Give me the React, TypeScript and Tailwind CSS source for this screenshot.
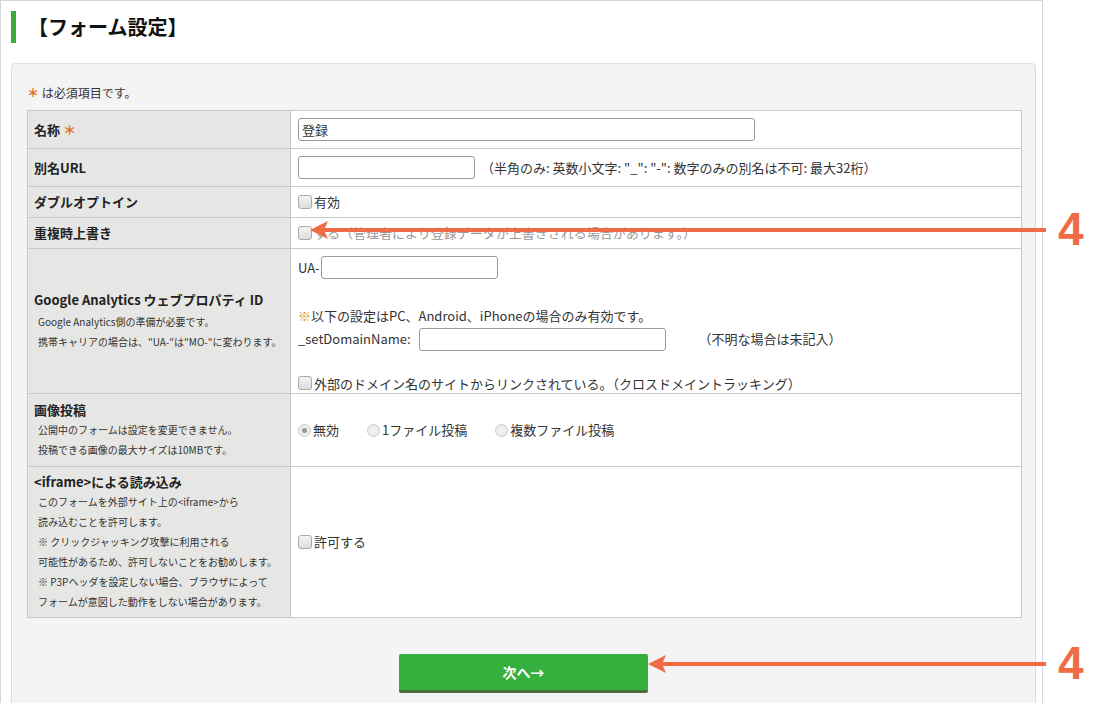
export default function App() {
  const f = { fontFamily: '"Noto Sans CJK JP", "Noto Sans", sans-serif' };
  const cb = <span className="inline-block w-[14px] h-[14px] rounded-[3px] border border-[#aaa] bg-gradient-to-b from-[#f4f4f4] to-[#ddd] mr-[2px] align-middle" />;
  const radio = (on: boolean) => (
    <span className="inline-flex w-[13px] h-[13px] rounded-full border border-[#c8c8c8] bg-[#eee] items-center justify-center mr-[2px]">
      {on && <span className="w-[5px] h-[5px] rounded-full bg-[#999]" />}
    </span>
  );
  const lab = "bg-[#e6e7e4] border border-[#c9c9c9] px-[6px] font-bold text-[13px] text-[#222] align-middle";
  const val = "bg-white border border-[#c9c9c9] px-[7px] text-[13px] text-[#333] align-middle";
  const small = "text-[10px] font-normal leading-[20px] pl-[4px] text-[#333]";
  const input = "border border-[#999] rounded-[3px] h-[23px] bg-white";
  return (
    <div style={f} className="relative w-[1098px] h-[703px] bg-white overflow-hidden">
      <div className="absolute left-0 top-0 w-[1043px] h-[703px] border-t border-l border-r border-[#d6d6d6]">
        <div className="flex items-center h-[32px] mt-[10px] ml-[10px] border-l-[5px] border-[#3aaa3a] pl-[12px] text-[20px] font-bold text-[#111]">【フォーム設定】</div>
        <div className="mx-[10px] mt-[20px] w-[1025px] h-[660px] bg-[#f4f4f4] border border-[#ddd] rounded-[4px] px-[15px] pt-[20px]">
          <div className="text-[12px] text-[#333] h-[26px]"><span className="text-[#e8661e] font-bold">＊</span> は必須項目です。</div>
          <table className="w-[995px] border-collapse">
            <tbody>
              <tr className="h-[38px]">
                <td className={lab + " w-[263px]"}>名称 <span className="text-[#e8661e]">＊</span></td>
                <td className={val}><div className={input + " w-[457px] pl-[3px] text-[13px] leading-[21px]"}>登録</div></td>
              </tr>
              <tr className="h-[38px]">
                <td className={lab}>別名URL</td>
                <td className={val}><div className="flex items-center"><div className={input + " w-[177px]"} /><span className="ml-[6px]">（半角のみ: 英数小文字: "_": "-": 数字のみの別名は不可: 最大32桁）</span></div></td>
              </tr>
              <tr className="h-[31px]">
                <td className={lab}>ダブルオプトイン</td>
                <td className={val}><div className="flex items-center">{cb}有効</div></td>
              </tr>
              <tr className="h-[31px]">
                <td className={lab}>重複時上書き</td>
                <td className={val}><div className="flex items-center text-[#999]">{cb}する（管理者により登録データが上書きされる場合があります。）</div></td>
              </tr>
              <tr className="h-[143px]">
                <td className={lab}>
                  <div className="text-[13px]">Google Analytics ウェブプロパティ ID</div>
                  <div className={small + " mt-[2px]"}>Google Analytics側の準備が必要です。</div>
                  <div className={small}>携帯キャリアの場合は、"UA-"は"MO-"に変わります。</div>
                </td>
                <td className={val + " align-top"}>
                  <div className="flex items-center mt-[7px]">UA-<div className={input + " w-[177px] ml-[1px]"} /></div>
                  <div className="mt-[27px]"><span className="text-[#d4a017]">※</span>以下の設定はPC、Android、iPhoneの場合のみ有効です。</div>
                  <div className="flex items-center mt-[2px]">_setDomainName:<div className={input + " w-[247px] ml-[8px]"} /><span className="ml-[33px]">（不明な場合は未記入）</span></div>
                  <div className="flex items-center mt-[23px]">{cb}外部のドメイン名のサイトからリンクされている。（クロスドメイントラッキング）</div>
                </td>
              </tr>
              <tr className="h-[73px]">
                <td className={lab}>
                  <div>画像投稿</div>
                  <div className={small}>公開中のフォームは設定を変更できません。</div>
                  <div className={small}>投稿できる画像の最大サイズは10MBです。</div>
                </td>
                <td className={val}>
                  <div className="flex items-center gap-[28px]">
                    <span className="flex items-center">{radio(true)}無効</span>
                    <span className="flex items-center">{radio(false)}1ファイル投稿</span>
                    <span className="flex items-center">{radio(false)}複数ファイル投稿</span>
                  </div>
                </td>
              </tr>
              <tr className="h-[151px]">
                <td className={lab}>
                  <div>&lt;iframe&gt;による読み込み</div>
                  <div className={small}>このフォームを外部サイト上の&lt;iframe&gt;から</div>
                  <div className={small}>読み込むことを許可します。</div>
                  <div className={small}>※ クリックジャッキング攻撃に利用される</div>
                  <div className={small}>可能性があるため、許可しないことをお勧めします。</div>
                  <div className={small}>※ P3Pヘッダを設定しない場合、ブラウザによって</div>
                  <div className={small}>フォームが意図した動作をしない場合があります。</div>
                </td>
                <td className={val}><div className="flex items-center">{cb}許可する</div></td>
              </tr>
            </tbody>
          </table>
          <div className="flex justify-center mt-[36px]">
            <div className="w-[249px] h-[39px] bg-[#35b03e] border-b-[3px] border-[#4b6e3a] rounded-[2px] flex items-center justify-center text-white font-bold text-[14px]">次へ→</div>
          </div>
        </div>
      </div>
      {[230, 664].map((y, i) => (
        <div key={y}>
          <svg className="absolute" style={{ left: 0, top: y - 12 }} width="1098" height="24">
            <line x1={i === 0 ? 322 : 660} y1="12" x2="1046" y2="12" stroke="#ee6b45" strokeWidth="4" />
            <polygon points={i === 0 ? "310,12 328,3 324,12 328,21" : "648,12 666,3 662,12 666,21"} fill="#ee6b45" />
          </svg>
          <div className="absolute left-[1058px] text-[#ee6b45] font-bold text-[46px] leading-none" style={{ top: y - 24, fontFamily: '"Liberation Sans", sans-serif' }}>4</div>
        </div>
      ))}
    </div>
  );
}
